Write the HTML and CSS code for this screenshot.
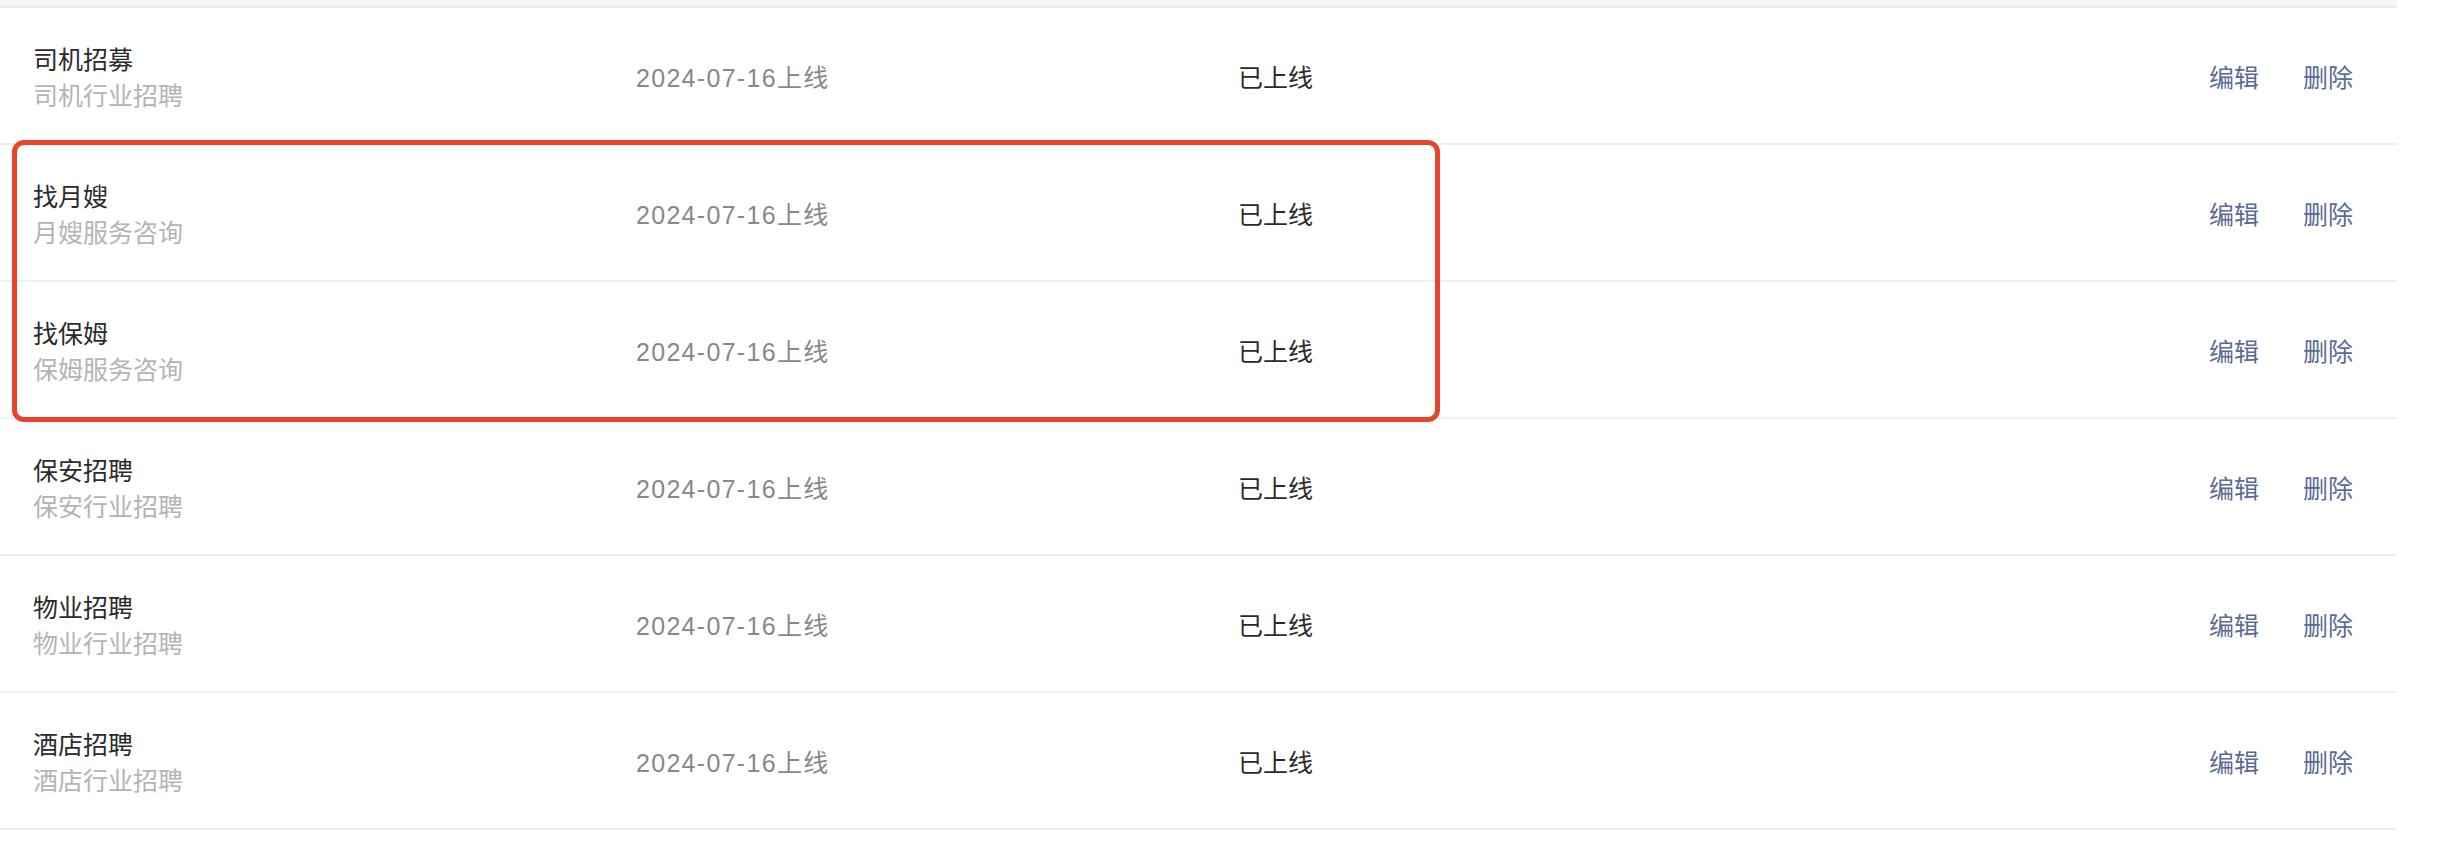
FILE: index.html
```html
<!DOCTYPE html>
<html lang="zh-CN">
<head>
<meta charset="utf-8">
<title>列表</title>
<link rel="stylesheet" href="styles.css">
</head>
<body>
<div class="table">
  <div class="table-head"></div>
  <div class="row">
    <div class="name"><div class="title">司机招募</div><div class="sub">司机行业招聘</div></div>
    <div class="date">2024-07-16上线</div>
    <div class="status">已上线</div>
    <div class="actions"><a class="act">编辑</a><a class="act">删除</a></div>
  </div>
  <div class="row">
    <div class="name"><div class="title">找月嫂</div><div class="sub">月嫂服务咨询</div></div>
    <div class="date">2024-07-16上线</div>
    <div class="status">已上线</div>
    <div class="actions"><a class="act">编辑</a><a class="act">删除</a></div>
  </div>
  <div class="row">
    <div class="name"><div class="title">找保姆</div><div class="sub">保姆服务咨询</div></div>
    <div class="date">2024-07-16上线</div>
    <div class="status">已上线</div>
    <div class="actions"><a class="act">编辑</a><a class="act">删除</a></div>
  </div>
  <div class="row">
    <div class="name"><div class="title">保安招聘</div><div class="sub">保安行业招聘</div></div>
    <div class="date">2024-07-16上线</div>
    <div class="status">已上线</div>
    <div class="actions"><a class="act">编辑</a><a class="act">删除</a></div>
  </div>
  <div class="row">
    <div class="name"><div class="title">物业招聘</div><div class="sub">物业行业招聘</div></div>
    <div class="date">2024-07-16上线</div>
    <div class="status">已上线</div>
    <div class="actions"><a class="act">编辑</a><a class="act">删除</a></div>
  </div>
  <div class="row">
    <div class="name"><div class="title">酒店招聘</div><div class="sub">酒店行业招聘</div></div>
    <div class="date">2024-07-16上线</div>
    <div class="status">已上线</div>
    <div class="actions"><a class="act">编辑</a><a class="act">删除</a></div>
  </div>
  <div class="highlight"></div>
</div>
</body>
</html>
```
FILE: styles.css
```css
html, body {
  margin: 0;
  padding: 0;
  background: #ffffff;
}
body {
  font-family: "Noto Sans CJK SC", "Noto Sans", sans-serif;
  font-size: 25px;
  color: #333333;
}
.table {
  position: relative;
  width: 2397px;
}
.table-head {
  height: 6px;
  background: #f5f6f8;
  border-bottom: 2px solid #e9ebef;
}
.row {
  display: grid;
  grid-template-columns: 603px 602px 1fr auto;
  align-items: center;
  height: 135px;
  padding: 0 44px 0 33px;
  border-bottom: 2px solid #eeeff2;
}
.title {
  font-size: 25px;
  line-height: 36px;
  color: #2b2b2b;
}
.sub {
  font-size: 25px;
  line-height: 36px;
  color: #b4b4b4;
}
.date {
  font-family: "Liberation Sans", "Noto Sans CJK SC", sans-serif;
  font-size: 25px;
  color: #888888;
  letter-spacing: 1.3px;
}
.status {
  color: #2b2b2b;
}
.actions {
  display: flex;
  gap: 44px;
}
.act {
  color: #5b6b95;
  cursor: pointer;
}
.highlight {
  position: absolute;
  left: 12px;
  top: 140px;
  width: 1418px;
  height: 272px;
  border: 5px solid #e8432b;
  border-radius: 12px;
  pointer-events: none;
}
```
